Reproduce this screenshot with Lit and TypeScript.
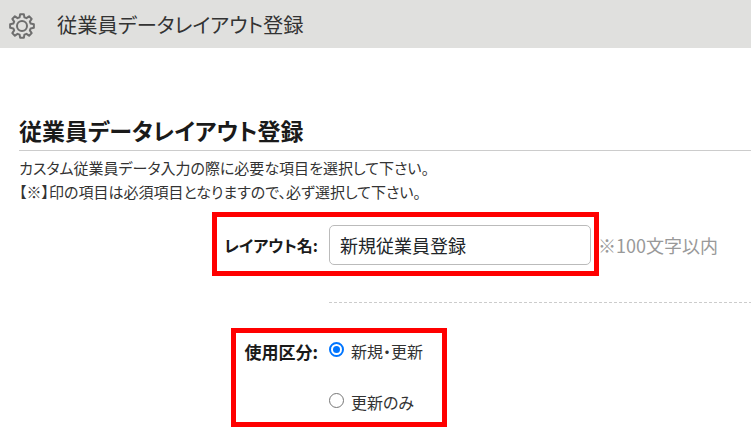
import { LitElement, html, css } from "lit";
import { customElement } from "lit/decorators.js";

function gearPath(cx: number, cy: number, outer: number, inner: number, teeth: number) {
  const pts: string[] = [];
  const step = (Math.PI * 2) / teeth;
  for (let i = 0; i < teeth; i++) {
    const a = i * step - Math.PI / 2;
    const offsets: [number, number][] = [
      [-0.3, inner],
      [-0.17, outer],
      [0.17, outer],
      [0.3, inner],
    ];
    for (const [o, r] of offsets) {
      const t = a + o * step * 1.15;
      pts.push(`${(cx + r * Math.cos(t)).toFixed(2)} ${(cy + r * Math.sin(t)).toFixed(2)}`);
    }
  }
  return "M" + pts.join("L") + "Z";
}

@customElement("app-root")
export class AppRoot extends LitElement {
  static styles = css`
    :host {
      display: block;
      width: 751px;
      height: 436px;
      overflow: hidden;
      background: #fff;
      color: #212529;
      font-family: "Noto Sans CJK JP", "Noto Sans", sans-serif;
      font-feature-settings: "palt";
    }
    .bar {
      height: 48px;
      background: #e0e0de;
      display: flex;
      align-items: center;
      padding-left: 9px;
      gap: 22px;
      font-size: 20.3px;
      color: #333;
    }
    .gear { width: 26px; height: 26px; display: block; margin-top: 4px; }
    .content { padding: 64px 0 0 19px; }
    h1 {
      margin: 0;
      height: 38px;
      line-height: 36px;
      font-size: 23px;
      font-weight: 700;
      color: #1a1a1a;
      border-bottom: 1px solid #ccc;
    }
    .desc {
      margin: 5px 0 0;
      font-size: 15px;
      line-height: 24px;
      color: #333;
    }
    .row {
      display: grid;
      grid-template-columns: 310px auto;
      position: relative;
    }
    .label {
      font-size: 16px;
      font-weight: 700;
      text-align: right;
      padding-right: 11px;
      color: #1a1a1a;
    }
    .name-row { margin-top: 21px; align-items: center; }
    .field { display: flex; align-items: center; gap: 7px; }
    .input {
      box-sizing: border-box;
      width: 262px;
      height: 40px;
      border: 1px solid #bbb;
      border-radius: 5px;
      padding-left: 10px;
      font-size: 18px;
      line-height: 38px;
      color: #212529;
    }
    .hint { font-size: 18px; color: #999; }
    .dash {
      margin: 37px 0 0 310px;
      height: 1px;
      background: repeating-linear-gradient(90deg, #ccc 0 3px, transparent 3px 5px);
    }
    .use-row { margin-top: 36px; }
    .use-row .label { font-size: 17px; }
    .radios { display: flex; flex-direction: column; gap: 27px; }
    .opt { display: flex; align-items: center; gap: 7px; font-size: 16px; line-height: 24px; color: #333; }
    .radio {
      box-sizing: border-box;
      width: 15px;
      height: 15px;
      border-radius: 50%;
      border: 1px solid #767676;
      background: #fff;
      margin-top: -3px;
    }
    .radio.on { border: 2px solid #0075ff; padding: 2px; background: #0075ff content-box; }
    .mark { position: absolute; border: 5px solid #f00; box-sizing: border-box; pointer-events: none; }
    .mark.a { left: 193px; width: 387px; top: -13px; height: 64px; }
    .mark.b { left: 212px; width: 216px; top: -11px; height: 99px; }
  `;

  render() {
    return html`
      <div class="bar">
        <svg class="gear" viewBox="0 0 26 26" fill="none" stroke="#6e6e6e" stroke-width="2" stroke-linejoin="round">
          <circle cx="13" cy="13" r="5"></circle>
          <path d=${gearPath(13, 13, 12, 9, 8)}></path>
        </svg>
        <span>従業員データレイアウト登録</span>
      </div>
      <div class="content">
        <h1>従業員データレイアウト登録</h1>
        <p class="desc">カスタム従業員データ入力の際に必要な項目を選択して下さい。<br />【※】印の項目は必須項目となりますので、必ず選択して下さい。</p>
        <div class="row name-row">
          <div class="label">レイアウト名:</div>
          <div class="field">
            <div class="input">新規従業員登録</div>
            <span class="hint">※100文字以内</span>
          </div>
          <div class="mark a"></div>
        </div>
        <div class="dash"></div>
        <div class="row use-row">
          <div class="label">使用区分:</div>
          <div class="radios">
            <div class="opt"><span class="radio on"></span>新規・更新</div>
            <div class="opt"><span class="radio"></span>更新のみ</div>
          </div>
          <div class="mark b"></div>
        </div>
      </div>
    `;
  }
}
